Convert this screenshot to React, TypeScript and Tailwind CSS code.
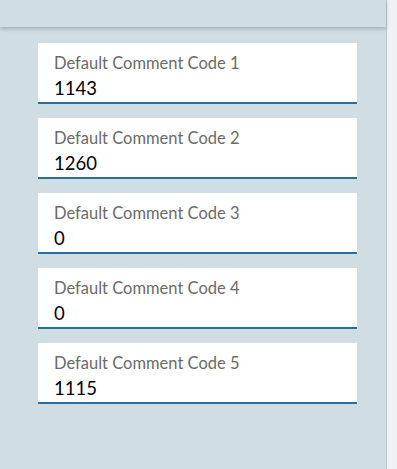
const codes = [
  { label: 'Default Comment Code 1', value: '1143' },
  { label: 'Default Comment Code 2', value: '1260' },
  { label: 'Default Comment Code 3', value: '0' },
  { label: 'Default Comment Code 4', value: '0' },
  { label: 'Default Comment Code 5', value: '1115' },
];

const App = () => {
  return (
    <div className="flex h-[469px] w-[397px] bg-[#eef2f5] font-['Lato',sans-serif]">
      <div className="flex w-[387px] flex-col border-r border-[#bfc7cb] bg-[#d0dde2]">
        <div className="h-[27px] shrink-0 bg-[#d0dde2] shadow-[0_2px_4px_rgba(0,0,0,0.2)]" />
        <div className="flex flex-col gap-[14px] pl-[38px] pr-[29px] pt-[16px]">
          {codes.map((code) => (
            <div
              key={code.label}
              className="h-[61px] border-b-2 border-[#2a6e9e] bg-white px-4 pt-[9px]"
            >
              <div className="text-[16.5px] leading-[22px] text-[#6b6b6b]">{code.label}</div>
              <div className="mt-[2px] text-[18.5px] leading-[25px] text-black">{code.value}</div>
            </div>
          ))}
        </div>
      </div>
    </div>
  );
};

export default App;
